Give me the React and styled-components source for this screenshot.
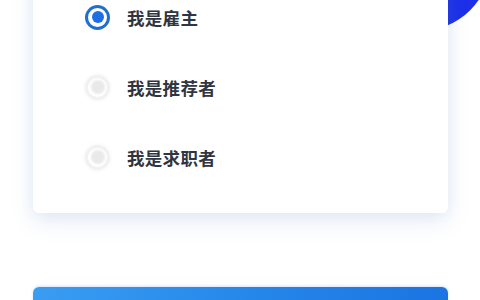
import React, { useState } from 'react';
import styled, { createGlobalStyle } from 'styled-components';

const GlobalStyle = createGlobalStyle`
  html, body {
    margin: 0;
    padding: 0;
    background: #ffffff;
    font-family: "Noto Sans CJK SC", "Noto Sans", sans-serif;
  }
`;

const StyledPage = styled.div`
  position: relative;
  width: 480px;
  height: 300px;
  overflow: hidden;
  background: #ffffff;
`;

// blue circle peeking out from behind the card's top-right corner
const Decoration = styled.div`
  position: absolute;
  top: -111px;
  left: 349px;
  width: 142px;
  height: 142px;
  border-radius: 50%;
  background: #1d2fe8;
  z-index: 0;
`;

const StyledCard = styled.div`
  position: relative;
  z-index: 1;
  margin: -30px 32px 0 33px;
  padding: 12px 0 21px;
  background: #ffffff;
  border-radius: 6px;
  box-shadow: 0 8px 22px rgba(90, 130, 200, 0.16), 0 0 14px rgba(120, 150, 210, 0.08);
`;

const StyledOption = styled.label`
  display: flex;
  align-items: center;
  height: 70px;
  padding-left: 52px;
  gap: 17px;
  cursor: pointer;
`;

const Radio = styled.span`
  box-sizing: border-box;
  width: 25px;
  height: 25px;
  border-radius: 50%;
  display: flex;
  align-items: center;
  justify-content: center;
  border: 3px solid ${({ checked }) => (checked ? '#1f6fd2' : '#f1f1f1')};
  background: #ffffff;
  box-shadow: ${({ checked }) => (checked ? 'none' : '0 0 4px rgba(0,0,0,0.06)')};

  &::after {
    content: '';
    width: ${({ checked }) => (checked ? '12px' : '14px')};
    height: ${({ checked }) => (checked ? '12px' : '14px')};
    border-radius: 50%;
    background: ${({ checked }) => (checked ? '#1e6ee6' : '#e9e9e9')};
    filter: ${({ checked }) => (checked ? 'none' : 'blur(1px)')};
  }
`;

const OptionText = styled.span`
  font-size: 17.5px;
  font-weight: 700;
  color: #2f3541;
  letter-spacing: 0.3px;
`;

const SubmitButton = styled.button`
  display: block;
  position: relative;
  z-index: 1;
  width: 415px;
  height: 44px;
  margin: 74px 0 0 33px;
  border: none;
  border-radius: 6px;
  background: linear-gradient(90deg, #3a9df2 0%, #2688ea 50%, #1b74e2 100%);
  box-shadow: 0 -1px 3px rgba(40, 120, 230, 0.2);
`;

const OPTIONS = ['我是雇主', '我是推荐者', '我是求职者'];

const App = () => {
  const [selected, setSelected] = useState(0);

  return (
    <>
      <GlobalStyle />
      <StyledPage>
        <Decoration />
        <StyledCard>
          {OPTIONS.map((text, i) => (
            <StyledOption key={text} onClick={() => setSelected(i)}>
              <Radio checked={selected === i} />
              <OptionText>{text}</OptionText>
            </StyledOption>
          ))}
        </StyledCard>
        <SubmitButton type="button" />
      </StyledPage>
    </>
  );
};

export default App;
